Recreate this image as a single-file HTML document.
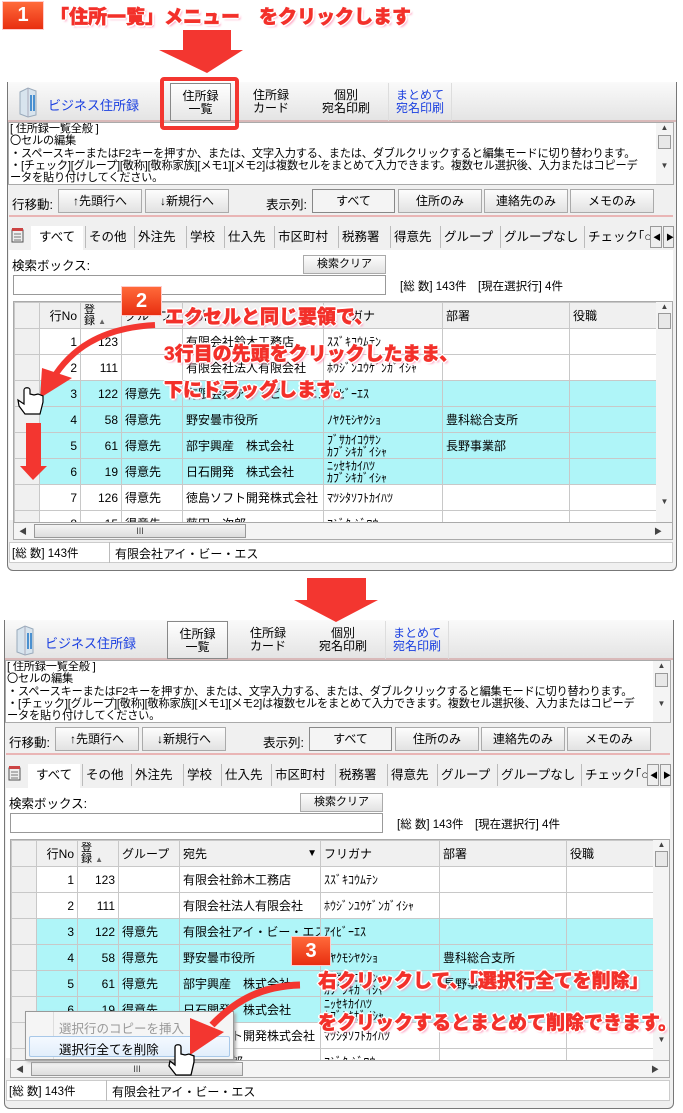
<!DOCTYPE html>
<html><head><meta charset="utf-8">
<style>
*{margin:0;padding:0;box-sizing:border-box}
body{width:683px;height:1104px;overflow:hidden;background:#fff;position:relative;font-family:"Liberation Sans","Noto Sans CJK JP",sans-serif;font-size:12px;color:#000}
.a{position:absolute}
.panel{position:absolute;left:0;width:683px;height:575px}
.frame{left:7px;top:82px;width:670px;height:489px;border:1px solid #777;border-radius:0 0 6px 6px;background:#f0f0f0}
.tb{left:8px;top:82px;width:668px;height:40px;background:linear-gradient(#fafafa,#e4e4e4);border-bottom:2px solid #d9b9b9}
.tbtn{text-align:center;line-height:13px;font-size:12px;padding-top:6px;height:38px}
.btn{height:24px;border:1px solid #aaa;background:linear-gradient(#fdfdfd,#e2e2e2);text-align:center;line-height:22px;font-size:12px}
.tabs span{position:absolute;top:0;height:22px;line-height:22px;border-left:1px solid #bbb;padding-left:3px;font-size:12.5px}
table{border-collapse:collapse;table-layout:fixed}
td{border:1px solid #c8c8c8;height:26px;font-size:12px;padding:0 3px;white-space:nowrap;overflow:hidden;line-height:12px}
.hd td{background:#f0f0f0}
.sel td{background:#aff5f8}
.sel td.rh,.rh{background:#f0f0f0}
.r{text-align:right}
.red{color:#f3302a;font-weight:900;text-shadow:2px 0 #fff,-2px 0 #fff,0 2px #fff,0 -2px #fff,1px 1px #fff,-1px -1px #fff,1px -1px #fff,-1px 1px #fff,2px 2px 2px #f9b;white-space:nowrap;-webkit-text-stroke:0.5px #f3302a}
.badge{background:linear-gradient(#ff6a3a,#e82e10);color:#fff;font-weight:bold;text-align:center;font-size:20px;border:1px solid #fcc}
</style></head><body>

<div class="panel" style="top:0">
<div class="a frame"></div>
<div class="a tb"></div>
<svg class="a" style="left:18px;top:86px" width="20" height="32"><path d="M2 6 L10 2 L18 5 L18 29 L10 31 L2 28Z" fill="#d8e4ee" stroke="#9ab" /><path d="M10 2 L10 31" stroke="#aab"/><g fill="#4a90d0"><rect x="12" y="9" width="2" height="16"/><rect x="15" y="9" width="2" height="16"/></g></svg>
<div class="a" style="left:48px;top:95px;color:#1a3fe0;font-size:13px">ビジネス住所録</div>
<div class="a tbtn" style="left:170px;top:83px;width:61px;border:1px solid #888;background:linear-gradient(#fff,#e6e6e6)">住所録<br>一覧</div>
<div class="a tbtn" style="left:240px;top:83px;width:62px">住所録<br>カード</div>
<div class="a tbtn" style="left:312px;top:83px;width:68px">個別<br>宛名印刷</div>
<div class="a tbtn" style="left:388px;top:83px;width:64px;color:#1a3fe0;border-left:1px solid #ddd;border-right:1px solid #ddd">まとめて<br>宛名印刷</div>
<div class="a" style="left:8px;top:122px;width:666px;height:63px;background:#fff;border:1px solid #aaa;font-size:11.2px;line-height:12.3px;padding-left:1px;overflow:hidden;white-space:nowrap;letter-spacing:-0.2px">[ 住所録一覧全般 ]<br>〇セルの編集<br>・スペースキーまたはF2キーを押すか、または、文字入力する、または、ダブルクリックすると編集モードに切り替わります。<br>・[チェック][グループ][敬称][敬称家族][メモ1][メモ2]は複数セルをまとめて入力できます。複数セル選択後、入力またはコピーデ<br>ータを貼り付けしてください。</div>
<div class="a" style="left:656px;top:123px;width:17px;height:61px;background:#f4f4f4;font-size:8px;text-align:center;color:#444">▲<div style="margin:3px 2px;height:14px;border:1px solid #999;background:#e8e8e8"></div><div style="margin-top:12px">▼</div></div>
<div class="a" style="left:9px;top:187px;width:664px;height:30px;border-bottom:2px solid #e9b5b5"></div>
<div class="a" style="left:12px;top:194px;font-size:12.5px">行移動:</div>
<div class="a btn" style="left:58px;top:189px;width:84px">↑先頭行へ</div>
<div class="a btn" style="left:145px;top:189px;width:84px">↓新規行へ</div>
<div class="a" style="left:266px;top:194px;font-size:12.5px">表示列:</div>
<div class="a btn" style="left:312px;top:189px;width:83px;background:#f4f4f4;border:1px solid #888">すべて</div>
<div class="a btn" style="left:398px;top:189px;width:84px">住所のみ</div>
<div class="a btn" style="left:484px;top:189px;width:84px">連絡先のみ</div>
<div class="a btn" style="left:570px;top:189px;width:84px">メモのみ</div>
<div class="a tabs" style="left:9px;top:226px;width:664px;height:24px">
<svg class="a" style="left:1px;top:1px" width="16" height="16"><rect x="2" y="3" width="11" height="12" fill="#eee" stroke="#555"/><rect x="2" y="1" width="11" height="3" fill="#c44"/><path d="M4 7h7M4 10h7M4 13h7" stroke="#777"/></svg>
<span style="left:22px;border:none;padding-left:8px;width:52px;height:24px;background:#fff">すべて</span>
<span style="left:76px">その他</span><span style="left:125px">外注先</span><span style="left:177px">学校</span><span style="left:215px">仕入先</span><span style="left:265px">市区町村</span><span style="left:329px">税務署</span><span style="left:381px">得意先</span><span style="left:431px">グループ</span><span style="left:491px">グループなし</span><span style="left:575px">チェック｢○</span>
<span style="left:641px;width:12px;border:1px solid #999;background:#eee;font-size:8px;padding-left:2px">◀</span><span style="left:654px;width:11px;border:1px solid #999;background:#eee;font-size:8px;padding-left:2px">▶</span>
</div>
<div class="a" style="left:9px;top:250px;width:664px;height:270px;background:#fff"></div>
<div class="a" style="left:12px;top:255px;font-size:12.5px">検索ボックス:</div>
<div class="a btn" style="left:303px;top:255px;width:83px;height:19px;line-height:17px;font-size:11px">検索クリア</div>
<div class="a" style="left:13px;top:275px;width:373px;height:20px;border:1px solid #999;background:#fff"></div>
<div class="a" style="left:400px;top:278px;font-size:11.5px">[総 数] 143件　[現在選択行] 4件</div>
<div class="a" style="left:13px;top:301px;width:660px;height:222px;overflow:hidden;border:1px solid #aaa;background:#fff">
<table style="width:642px">
<colgroup><col style="width:25px"><col style="width:41px"><col style="width:41px"><col style="width:61px"><col style="width:141px"><col style="width:119px"><col style="width:127px"><col style="width:87px"></colgroup>
<tr class="hd"><td></td><td class="r">行No</td><td style="font-size:11px;line-height:11px">登<br>録 <span style="font-size:8px;color:#666">▲</span></td><td>グループ</td><td>宛先 <span style="float:right;font-size:10px">▼</span></td><td>フリガナ</td><td>部署</td><td>役職</td></tr>
<tr><td class="rh"></td><td class="r">1</td><td class="r">123</td><td></td><td>有限会社鈴木工務店</td><td>ｽｽﾞｷｺｳﾑﾃﾝ</td><td></td><td></td></tr>
<tr><td class="rh"></td><td class="r">2</td><td class="r">111</td><td></td><td>有限会社法人有限会社</td><td>ﾎｳｼﾞﾝﾕｳｹﾞﾝｶﾞｲｼｬ</td><td></td><td></td></tr>
<tr class="sel"><td class="rh"></td><td class="r">3</td><td class="r">122</td><td>得意先</td><td>有限会社アイ・ビー・エス</td><td>ｱｲﾋﾞｰｴｽ</td><td></td><td></td></tr>
<tr class="sel"><td class="rh"></td><td class="r">4</td><td class="r">58</td><td>得意先</td><td>野安曇市役所</td><td>ﾉﾔｸﾓｼﾔｸｼｮ</td><td>豊科総合支所</td><td></td></tr>
<tr class="sel"><td class="rh"></td><td class="r">5</td><td class="r">61</td><td>得意先</td><td>部宇興産　株式会社</td><td>ﾌﾞｻｶｲｺｳｻﾝ<br>ｶﾌﾞｼｷｶﾞｲｼｬ</td><td>長野事業部</td><td></td></tr>
<tr class="sel"><td class="rh"></td><td class="r">6</td><td class="r">19</td><td>得意先</td><td>日石開発　株式会社</td><td>ﾆｯｾｷｶｲﾊﾂ<br>ｶﾌﾞｼｷｶﾞｲｼｬ</td><td></td><td></td></tr>
<tr><td class="rh"></td><td class="r">7</td><td class="r">126</td><td>得意先</td><td>徳島ソフト開発株式会社</td><td>ﾏﾂｼﾀｿﾌﾄｶｲﾊﾂ</td><td></td><td></td></tr>
<tr><td class="rh"></td><td class="r">8</td><td class="r">15</td><td>得意先</td><td>藤田　次郎</td><td>ﾌｼﾞﾀ ｼﾞﾛｳ</td><td></td><td></td></tr>
</table>
<div class="a" style="left:642px;top:0;width:17px;height:220px;background:#f4f4f4;font-size:8px;text-align:center;color:#444">▲<div style="margin:2px 2px;height:16px;border:1px solid #999;background:#e8e8e8"></div><div style="margin-top:168px">▼</div></div>
</div>
<div class="a" style="left:13px;top:522px;width:660px;height:18px;background:#f4f4f4;border:1px solid #aaa;font-size:8px;color:#444"><span class="a" style="left:5px;top:3px">◀</span><div class="a" style="left:20px;top:1px;width:212px;height:14px;border:1px solid #999;background:linear-gradient(#f4f4f4,#ddd);text-align:center;font-size:9px;line-height:12px">III</div><span class="a" style="left:640px;top:3px">▶</span></div>
<div class="a" style="left:9px;top:542px;width:664px;height:21px;background:#fff;border:1px solid #ccc"></div>
<div class="a" style="left:12px;top:545px;font-size:11.5px">[総 数] 143件</div>
<div class="a" style="left:109px;top:542px;width:1px;height:21px;background:#bbb"></div>
<div class="a" style="left:115px;top:545px;font-size:12px">有限会社アイ・ビー・エス</div>
</div>

<div id="p2"></div>

<div class="a badge" style="left:2px;top:1px;width:42px;height:29px;line-height:27px">1</div>
<div class="a red" style="left:50px;top:2px;font-size:19px">「住所一覧」メニュー　をクリックします</div>
<div class="a badge" style="left:121px;top:286px;width:41px;height:30px;line-height:28px">2</div>
<div class="a red" style="left:165px;top:302px;font-size:19px">エクセルと同じ要領で、</div>
<div class="a red" style="left:164px;top:339px;font-size:19px">3行目の先頭をクリックしたまま、</div>
<div class="a red" style="left:164px;top:375px;font-size:19px">下にドラッグします。</div>

<div class="a badge" style="left:291px;top:936px;width:40px;height:30px;line-height:28px">3</div>
<div class="a red" style="left:318px;top:966px;font-size:19px">右クリックして、「選択行全てを削除」</div>
<div class="a red" style="left:318px;top:1008px;font-size:19px">をクリックするとまとめて削除できます。</div>
<div class="a" style="left:25px;top:1011px;width:209px;height:49px;background:#f5f5f5;border:1px solid #999;box-shadow:2px 2px 3px #aaa">
<div class="a" style="left:27px;top:0;width:1px;height:47px;background:#ddd"></div>
<div class="a" style="left:33px;top:6px;color:#999;font-size:12.5px">選択行のコピーを挿入</div>
<div class="a" style="left:3px;top:24px;width:201px;height:21px;border:1px solid #a8c8e8;background:linear-gradient(#f4f9ff,#e2eefb);border-radius:2px"></div>
<div class="a" style="left:33px;top:27px;font-size:12.5px">選択行全てを削除</div>
</div>
<svg class="a" style="left:0;top:0;z-index:5" width="683" height="1104">
<path d="M183 30H231V50H243L207 73L159 50H183Z" fill="#f33630"/>
<rect x="162" y="79" width="75" height="49" fill="none" stroke="#f33630" stroke-width="4" rx="2"/>
<path d="M307 578H366V600H378L336 622L294 600H307Z" fill="#f33630"/>
<path d="M155 325 C100 328 70 350 52 380" fill="none" stroke="#f33630" stroke-width="6"/>
<path d="M40 398L42 368L72 378Z" fill="#f33630"/>
<path d="M26 423H41V466H47L33 480L20 466H26Z" fill="#f33630"/>
<path d="M24 390V404L18 400L19 406L25 414H40L43 402V396L38 394L34 395L30 394V390C30 387 24 387 24 390Z" fill="#fff" stroke="#000" stroke-width="1.2"/>
<path d="M300 985 C262 986 236 1000 212 1025" fill="none" stroke="#f33630" stroke-width="7"/>
<path d="M190 1055L190 1018L224 1032Z" fill="#f33630"/>
<path d="M175 1047V1065L170 1061L169 1066L176 1075H191L194 1062V1056L189 1054L185 1055L181 1054V1047C181 1044 175 1044 175 1047Z" fill="#fff" stroke="#000" stroke-width="1.3"/>
</svg>

<script>
var p=document.querySelector('.panel').cloneNode(true);
p.style.top='538px';p.style.left='-3px';
document.getElementById('p2').replaceWith(p);
document.body.insertBefore(p,document.body.children[1]);
</script>
</body></html>
